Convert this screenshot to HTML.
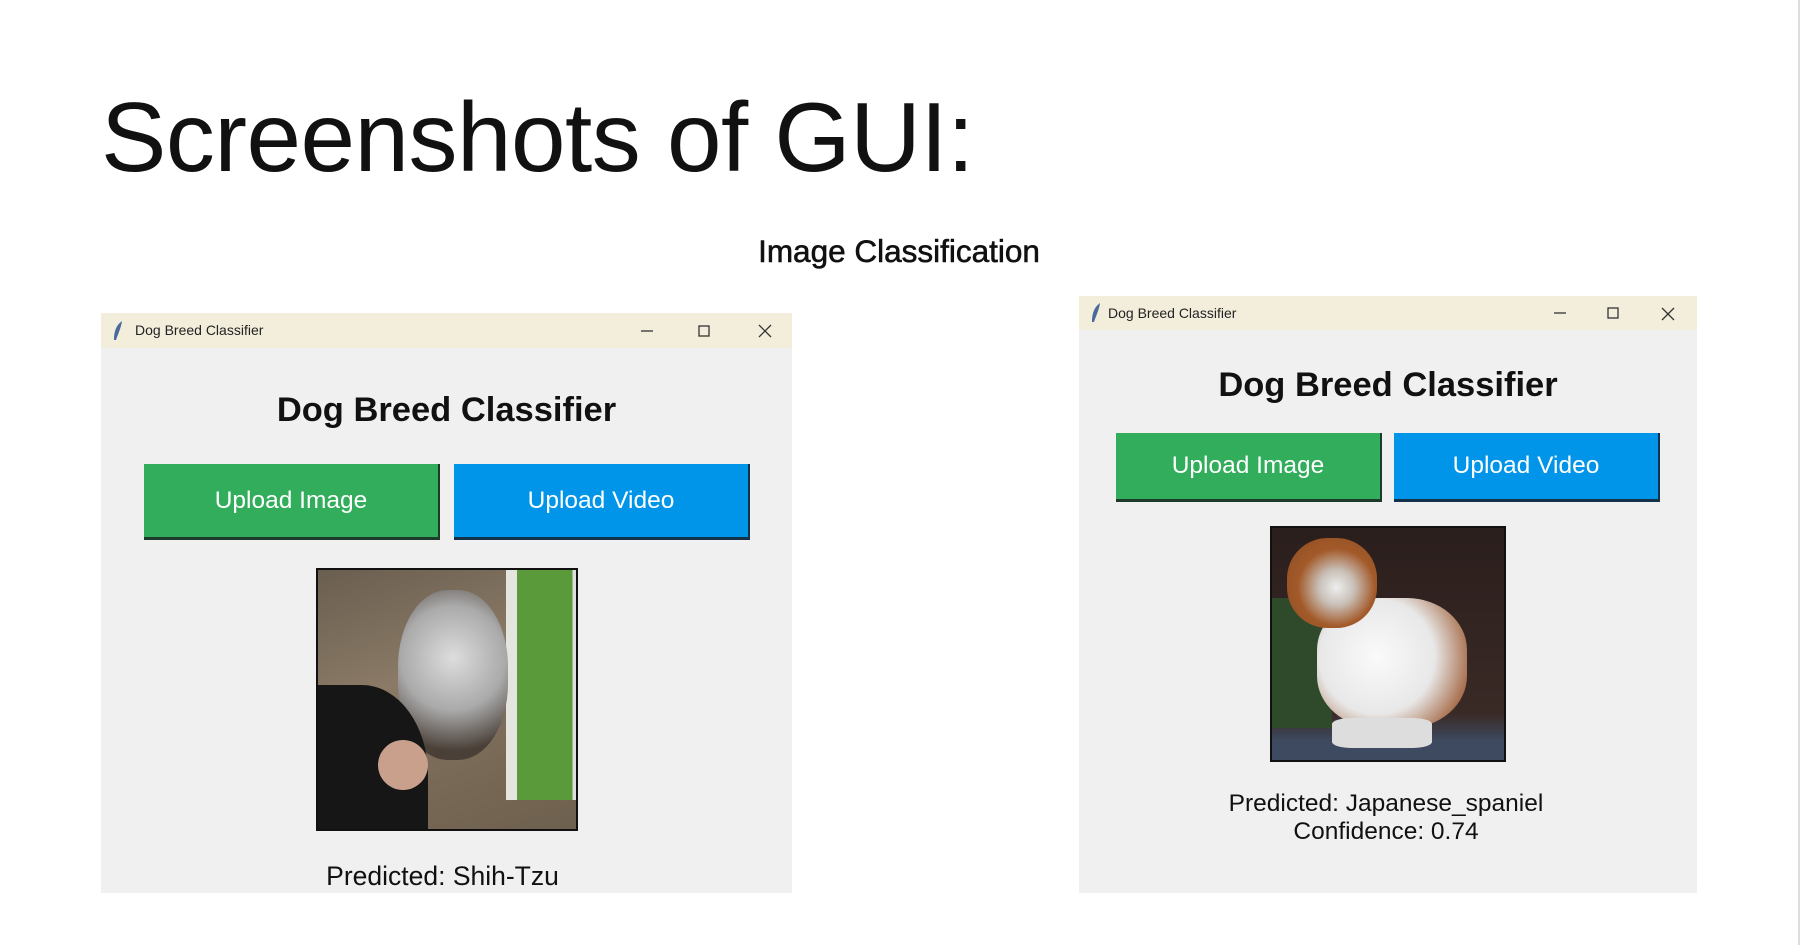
<!DOCTYPE html>
<html><head><meta charset="utf-8"><style>
*{margin:0;padding:0;box-sizing:border-box}
body{width:1802px;height:945px;background:#fff;position:relative;overflow:hidden;font-family:"Liberation Sans",Arial,sans-serif}
.abs{position:absolute}
.win{position:absolute;background:#f0f0f0}
.tb{position:absolute;left:0;right:0;top:0;background:#f3eedc;font-size:14px;color:#222}
.ctr{position:absolute;text-align:center;white-space:nowrap}
.btn{position:absolute;color:#fff;display:flex;align-items:center;justify-content:center;font-size:24.5px;border-right:2px solid #1d3b2a;border-bottom:3px solid #1d3b2a}
.g{background:#31ad5b}.b{background:#0095e8;border-color:#13324a}
.h{font-weight:bold;font-size:34.5px;color:#111}
.p{color:#111}
</style></head><body>
<div class="abs" style="left:101px;top:88px;font-size:98px;color:#111;letter-spacing:-0.5px;line-height:1">Screenshots of GUI:</div>
<div class="ctr" style="left:699px;width:400px;top:233px;font-size:31.5px;color:#111;-webkit-text-stroke:0.6px #111">Image Classification</div>
<div class="abs" style="left:1798px;top:0;width:2px;height:945px;background:#ddd"></div>

<!-- left window -->
<div class="win" style="left:101px;top:313px;width:691px;height:580px">
 <div class="tb" style="height:35px">
  <svg class="abs" style="left:10px;top:7px" width="14" height="22"><path d="M11 1 C4 6 3 14 3 20 L5 20 C7 14 10 8 11 1Z" fill="#4a6a9a"/></svg>
  <span class="abs" style="left:34px;top:9px">Dog Breed Classifier</span>
  <svg class="abs" style="left:538px;top:10px" width="140" height="16" fill="none" stroke="#333" stroke-width="1.3"><path d="M2 8h12"/><rect x="60" y="3" width="10" height="10"/><path d="M120 2l12 12M132 2l-12 12"/></svg>
 </div>
 <div class="ctr h" style="left:0;width:691px;top:78px">Dog Breed Classifier</div>
 <div class="btn g" style="left:43px;top:151px;width:296px;height:76px">Upload Image</div>
 <div class="btn b" style="left:353px;top:151px;width:296px;height:76px">Upload Video</div>
 <div class="abs" style="left:215px;top:255px;width:262px;height:263px;border:2px solid #111;background:linear-gradient(160deg,#6a5e50 0%,#8a7a66 40%,#7d6d5a 60%,#6e604e 100%);overflow:hidden">
  <div class="abs" style="left:188px;top:0;width:74px;height:230px;background:linear-gradient(90deg,#e5e5e0 0 15%,#5b9a3a 15% 90%,#ddd 90%)"></div>
  <div class="abs" style="left:80px;top:20px;width:110px;height:170px;border-radius:45%;background:radial-gradient(circle at 50% 40%,#ddd 0,#aaa 45%,#4a4038 80%)"></div>
  <div class="abs" style="left:0;top:115px;width:110px;height:150px;background:#161616;border-radius:0 60% 0 0"></div>
  <div class="abs" style="left:60px;top:170px;width:50px;height:50px;background:#c9a08c;border-radius:50%"></div>
 </div>
 <div class="ctr p" style="left:0;width:683px;top:548px;font-size:26.5px">Predicted: Shih-Tzu</div>
</div>

<!-- right window -->
<div class="win" style="left:1079px;top:296px;width:618px;height:597px">
 <div class="tb" style="height:34px">
  <svg class="abs" style="left:10px;top:6px" width="14" height="22"><path d="M11 1 C4 6 3 14 3 20 L5 20 C7 14 10 8 11 1Z" fill="#4a6a9a"/></svg>
  <span class="abs" style="left:29px;top:9px">Dog Breed Classifier</span>
  <svg class="abs" style="left:473px;top:10px" width="140" height="16" fill="none" stroke="#333" stroke-width="1.3"><path d="M2 7h12"/><rect x="56" y="2" width="10" height="10"/><path d="M110 2l12 12M122 2l-12 12"/></svg>
 </div>
 <div class="ctr h" style="left:0;width:618px;top:70px">Dog Breed Classifier</div>
 <div class="btn g" style="left:37px;top:137px;width:266px;height:69px">Upload Image</div>
 <div class="btn b" style="left:315px;top:137px;width:266px;height:69px">Upload Video</div>
 <div class="abs" style="left:191px;top:230px;width:236px;height:236px;border:2px solid #111;background:linear-gradient(180deg,#2a1e1c 0%,#3a2a26 80%,#3d4a60 92%);overflow:hidden">
  <div class="abs" style="left:0;top:70px;width:60px;height:130px;background:#2f4a2a"></div>
  <div class="abs" style="left:45px;top:70px;width:150px;height:130px;border-radius:40%;background:radial-gradient(circle at 40% 45%,#fafafa 0,#e8e8e8 50%,#a0603a 85%)"></div>
  <div class="abs" style="left:15px;top:10px;width:90px;height:90px;border-radius:45%;background:radial-gradient(circle at 55% 55%,#eee 0,#c9c0b8 25%,#a35a2a 55%,#8a4a20 100%)"></div>
  <div class="abs" style="left:60px;top:190px;width:100px;height:30px;background:#ddd;border-radius:20%"></div>
 </div>
 <div class="ctr p" style="left:0;width:614px;top:494px;line-height:28px;font-size:24.5px">Predicted: Japanese_spaniel<br>Confidence: 0.74</div>
</div>
</body></html>
